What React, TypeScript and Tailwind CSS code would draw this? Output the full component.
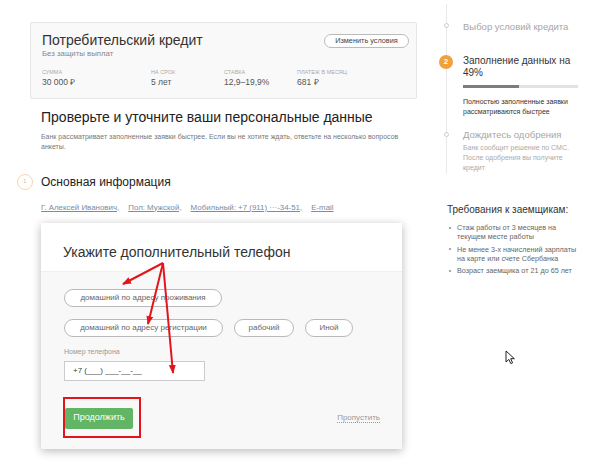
import React from 'react'

const font = "font-['Liberation_Sans',Arial,sans-serif]"

const TERMS = [
  { label: 'Сумма', value: '30 000 ₽', w: 'w-[109px]' },
  { label: 'На срок', value: '5 лет', w: 'w-[73px]' },
  { label: 'Ставка', value: '12,9–19,9%', w: 'w-[73px]' },
  { label: 'Платеж в месяц', value: '681 ₽', w: 'w-[90px]' },
]

const LINKS = ['Г. Алексей Иванович,', 'Пол: Мужской,', 'Мобильный: +7 (911) ···-34-51,', 'E-mail']

function Pill({ children, w }: { children: React.ReactNode; w: string }) {
  return (
    <span className={`${w} h-[18px] inline-flex items-center justify-center rounded-full border border-[#b9b9b9] bg-white text-[8px] text-[#666]`}>
      {children}
    </span>
  )
}

function CreditCard() {
  return (
    <div className="rounded-[2px] border border-[#e6e6e6] bg-[#f9f9f9] pt-[10px] pb-[10px] pl-[11px] pr-[7px]">
      <div className="flex items-start justify-between">
        <div>
          <div className="text-[14px] leading-[15px] text-[#333]">Потребительский кредит</div>
          <div className="text-[7.8px] leading-[10px] text-[#888] mt-[0.5px]">Без защиты выплат</div>
        </div>
        <button className="mt-[1px] h-[14px] w-[85px] rounded-full border border-[#bbb] bg-white text-[7.3px] leading-none text-[#444]">
          Изменить условия
        </button>
      </div>
      <div className="flex mt-[9px]">
        {TERMS.map((t) => (
          <div key={t.label} className={t.w}>
            <div className="text-[5.5px] leading-[8px] uppercase text-[#aaa]">{t.label}</div>
            <div className="text-[8.5px] leading-[12px] text-[#555]">{t.value}</div>
          </div>
        ))}
      </div>
    </div>
  )
}

function PhoneModal() {
  return (
    <div className="mt-[10px] w-[361px] bg-[#f8f8f8] shadow-[0_2px_9px_rgba(0,0,0,0.28)]">
      <div className="bg-white border-b border-[#efefef] pt-[21px] pb-[10px] pl-[22px]">
        <div className="text-[14px] leading-[17px] text-[#333]">Укажите дополнительный телефон</div>
      </div>
      <div className="pl-[23px] pr-[22px] pt-[17px] pb-[20px]">
        <div className="flex">
          <Pill w="w-[158px]">домашний по адресу проживания</Pill>
        </div>
        <div className="flex gap-[11px] mt-[12px]">
          <Pill w="w-[159px]">домашний по адресу регистрации</Pill>
          <Pill w="w-[60px]">рабочий</Pill>
          <Pill w="w-[48px]">Иной</Pill>
        </div>
        <div className="mt-[10px] text-[7px] leading-[10px] text-[#999]">Номер телефона</div>
        <div className="mt-[4px] w-[141px] h-[20px] border border-[#ccc] bg-white flex items-center pl-[8px] text-[8px] text-[#444]">
          +7 (___) ___-__-__
        </div>
        <div className="mt-[27px] flex items-center justify-between">
          <button className="ml-[1px] w-[68px] h-[21px] rounded-[2px] bg-[#62b565] text-white text-[9px]">Продолжить</button>
          <span className="text-[8px] text-[#999] underline decoration-dotted underline-offset-2">Пропустить</span>
        </div>
      </div>
    </div>
  )
}

function Sidebar() {
  return (
    <aside className="ml-[23px] w-[160px]">
      <div className="relative pt-[21px]">
        <div className="absolute left-[6px] top-[4px] w-px h-[170px] bg-[#e9e9e9]" />
        <div className="relative flex items-start">
          <span className="w-[13px] flex justify-center pt-[2px]">
            <span className="block w-[5px] h-[5px] rounded-full border border-[#ccc] bg-white" />
          </span>
          <span className="ml-[10px] text-[9.5px] leading-[12px] text-[#a6a6a6]">Выбор условий кредита</span>
        </div>
        <div className="relative flex items-start mt-[22px]">
          <span className="w-[13px] flex justify-center">
            <span className="-ml-[1px] w-[14px] h-[14px] shrink-0 rounded-full bg-[#f2a03a] text-white text-[8px] font-bold flex items-center justify-center">2</span>
          </span>
          <div className="ml-[10px]">
            <div className="text-[10px] leading-[12px] text-[#333]">Заполнение данных на<br />49%</div>
            <div className="mt-[6px] w-[115px] h-[3px] bg-[#e2e2e2]">
              <div className="h-full bg-[#7d7d7d]" style={{ width: '49%' }} />
            </div>
            <div className="mt-[9px] text-[7px] leading-[10px] text-[#333]">
              Полностью заполненные заявки<br />рассматриваются быстрее
            </div>
          </div>
        </div>
        <div className="relative flex items-start mt-[12px]">
          <span className="w-[13px] flex justify-center pt-[3px]">
            <span className="block w-[5px] h-[5px] rounded-full border border-[#ccc] bg-white" />
          </span>
          <div className="ml-[10px]">
            <div className="text-[9.5px] leading-[12px] text-[#a6a6a6]">Дождитесь одобрения</div>
            <div className="mt-[2px] text-[7px] leading-[10px] text-[#aaa]">
              Банк сообщит решение по СМС.<br />После одобрения вы получите<br />кредит
            </div>
          </div>
        </div>
      </div>
      <div className="pl-[7px] mt-[30px]">
        <div className="text-[10px] leading-[13px] text-[#333]">Требования к заемщикам:</div>
        <ul className="mt-[7px] flex flex-col gap-[3.5px] text-[7.2px] leading-[9px] text-[#666]">
          {[
            <>Стаж работы от 3 месяцев на<br />текущем месте работы</>,
            <>Не менее 3-х начислений зарплаты<br />на карте или счете Сбербанка</>,
            <>Возраст заемщика от 21 до 65 лет</>,
          ].map((t, i) => (
            <li key={i} className="flex">
              <span className="w-[10px] pl-[2px] pt-[3.5px]">
                <span className="block w-[2px] h-[2px] rounded-full bg-[#888]" />
              </span>
              <span>{t}</span>
            </li>
          ))}
        </ul>
      </div>
    </aside>
  )
}

export default function App() {
  return (
    <div className={`relative w-[600px] h-[467px] overflow-hidden bg-white ${font}`}>
      <div className="flex">
        <main className="ml-[30px] w-[387px] pt-[22px]">
          <CreditCard />
          <div className="pl-[11px]">
            <h1 className="mt-[10px] text-[14px] leading-[17px] text-[#222]">Проверьте и уточните ваши персональные данные</h1>
            <p className="mt-[6px] text-[7px] leading-[10px] text-[#777]">
              Банк рассматривает заполненные заявки быстрее. Если вы не хотите ждать, ответьте на несколько вопросов<br />анкеты.
            </p>
            <div className="mt-[22px] -ml-[24px] flex items-center gap-[8px]">
              <span className="w-[16px] h-[16px] rounded-full border border-[#f5d6b0] text-[6px] text-[#f0b47a] flex items-center justify-center">1</span>
              <span className="text-[12px] leading-[14px] text-[#222]">Основная информация</span>
            </div>
            <div className="mt-[13px] flex gap-[9px] text-[7.9px] leading-[10px] text-[#7b8ca0]">
              {LINKS.map((l) => (
                <span key={l} className="underline underline-offset-1">{l}</span>
              ))}
            </div>
            <PhoneModal />
          </div>
        </main>
        <Sidebar />
      </div>

      {/* annotations */}
      <div className="absolute left-[63px] top-[397px] w-[78px] h-[41px] border-2 border-[#e3141b]" />
      <svg className="absolute inset-0 pointer-events-none" width="600" height="467">
        <defs>
          <marker id="ah" markerUnits="userSpaceOnUse" markerWidth="9" markerHeight="8" refX="8" refY="4" orient="auto">
            <path d="M0,0.5 L9,4 L0,7.5 z" fill="#e3141b" />
          </marker>
        </defs>
        <g stroke="#e3141b" strokeWidth="2" fill="none">
          <line x1="163" y1="263" x2="123" y2="284" markerEnd="url(#ah)" />
          <line x1="163" y1="263" x2="148" y2="324" markerEnd="url(#ah)" />
          <line x1="163" y1="263" x2="173" y2="373" markerEnd="url(#ah)" />
        </g>
      </svg>
      <svg className="absolute left-[505px] top-[350px]" width="11" height="15" viewBox="0 0 11 15">
        <path d="M1,1 L1,12 L3.8,9.4 L5.8,13.6 L7.6,12.8 L5.7,8.7 L9.4,8.7 Z" fill="#fff" stroke="#222" strokeWidth="1" strokeLinejoin="round" />
      </svg>
    </div>
  )
}
